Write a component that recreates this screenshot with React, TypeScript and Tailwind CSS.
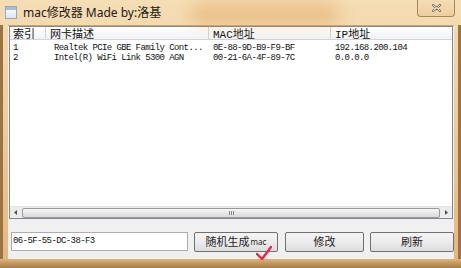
import React from 'react';

const rows = [
  { idx: '1', desc: 'Realtek PCIe GBE Family Cont...', mac: '0E-88-9D-B9-F9-BF', ip: '192.168.200.104' },
  { idx: '2', desc: 'Intel(R) WiFi Link 5300 AGN', mac: '00-21-6A-4F-89-7C', ip: '0.0.0.0' },
];

const cjk = "font-['Noto_Sans','Noto_Sans_CJK_SC',sans-serif]";
const mono = "font-['Liberation_Mono','Noto_Sans_CJK_SC',monospace]";

function WinButton({ children, className = '' }: { children: React.ReactNode; className?: string }) {
  return (
    <div
      className={`h-[20px] flex items-center justify-center border border-[#707070] rounded-[2px] bg-gradient-to-b from-[#f4f4f4] via-[#ececec] to-[#dcdcdc] text-[11px] text-[#222] ${cjk} ${className}`}
    >
      {children}
    </div>
  );
}

export default function App() {
  return (
    <div className="w-[461px] h-[268px] overflow-hidden relative flex flex-col bg-gradient-to-b from-[#f5ddb4] via-[#eccb98] to-[#e2b77d]">
      {/* title glow */}
      <div className="absolute left-[190px] top-[4px] w-[150px] h-[20px] rounded-full bg-[#d9954a] opacity-40 blur-[8px]" />

      {/* Title bar */}
      <div className="h-[25px] flex items-center relative shrink-0">
        <div className="ml-[5px] w-[12px] h-[13px] border border-[#9aa7b5] bg-gradient-to-b from-[#ffffff] to-[#dbe6f0] flex items-start">
          <div className="w-full h-[3px] bg-[#9fc0de]" />
        </div>
        <span className={`ml-[6px] text-[12px] text-[#1a1a1a] ${cjk}`}>mac修改器 Made by:洛基</span>
        <div className="absolute right-[6px] top-0 w-[38px] h-[17px] rounded-b-[4px] border border-t-0 border-[#a8865a] bg-gradient-to-b from-[#f3dcb4]/60 to-[#e8c895]/60 flex items-center justify-center">
          <svg width="9" height="8" viewBox="0 0 9 8">
            <path d="M1 1 L8 7 M8 1 L1 7" stroke="#6b5a45" strokeWidth="2.2" strokeLinecap="round" />
            <path d="M1 1 L8 7 M8 1 L1 7" stroke="#f4f4f4" strokeWidth="1" strokeLinecap="round" />
          </svg>
        </div>
      </div>

      {/* Body with side frames */}
      <div className="flex flex-1 min-h-0">
        <div className="w-[8px] shrink-0 flex">
          <div className="w-[3px] bg-[#9c7443]" />
          <div className="flex-1" />
        </div>

        <div className="flex-1 bg-[#f0f0f0] flex flex-col border-t border-[#c9a574]">
          {/* List view */}
          <div className="mx-[1px] h-[193px] border border-[#828790] bg-white flex flex-col">
            <div className={`h-[13px] flex items-stretch bg-gradient-to-b from-white to-[#f1f2f4] border-b border-[#d5d5d5] text-[11px] leading-[13px] text-[#111] ${cjk}`}>
              <div className="w-[36px] pl-[3px] border-r border-[#d5d5d5]">索引</div>
              <div className="w-[163px] pl-[4px] border-r border-[#d5d5d5]">网卡描述</div>
              <div className="w-[122px] pl-[4px] border-r border-[#d5d5d5]">
                <span className={mono}>MAC</span>地址
              </div>
              <div className="flex-1 pl-[4px]">
                <span className={mono}>IP</span>地址
              </div>
            </div>
            <div className={`flex-1 pt-[3px] text-[9px] tracking-[-0.6px] leading-[10px] text-[#111] ${mono}`}>
              {rows.map((r) => (
                <div key={r.idx} className="flex h-[10px]">
                  <div className="w-[36px] pl-[3px]">{r.idx}</div>
                  <div className="w-[163px] pl-[8px]">{r.desc}</div>
                  <div className="w-[122px] pl-[4px]">{r.mac}</div>
                  <div className="flex-1 pl-[4px]">{r.ip}</div>
                </div>
              ))}
            </div>
            {/* horizontal scrollbar */}
            <div className="h-[12px] flex items-center bg-[#ececec] border-t border-[#e3e3e3]">
              <div className="w-[12px] h-full flex items-center justify-center">
                <svg width="4" height="5" viewBox="0 0 4 5"><path d="M3 0 L0 2.5 L3 5 Z" fill="#505050" /></svg>
              </div>
              <div className="flex-1 h-[10px] rounded-[2px] border border-[#9a9a9a] bg-gradient-to-b from-[#f6f6f6] to-[#d9d9d9] flex items-center justify-center">
                <div className="flex gap-[1px]">
                  <div className="w-[1px] h-[4px] bg-[#888]" />
                  <div className="w-[1px] h-[4px] bg-[#888]" />
                  <div className="w-[1px] h-[4px] bg-[#888]" />
                </div>
              </div>
              <div className="w-[12px] h-full flex items-center justify-center">
                <svg width="4" height="5" viewBox="0 0 4 5"><path d="M1 0 L4 2.5 L1 5 Z" fill="#505050" /></svg>
              </div>
            </div>
          </div>

          {/* Bottom controls */}
          <div className="flex items-start mt-[13px] pl-[3px]">
            <div className={`w-[177px] h-[19px] border border-[#abadb3] bg-white flex items-center pl-[1px] text-[9px] tracking-[-0.6px] text-[#111] ${mono}`}>
              06-5F-55-DC-38-F3
            </div>
            <div className="relative ml-[6px]">
              <WinButton className="w-[84px]">
                随机生成<span className="text-[8px] ml-[1px]">mac</span>
              </WinButton>
              <svg className="absolute left-[62px] top-[13px]" width="16" height="16" viewBox="0 0 16 16">
                <path d="M1 9 L6 14 L15 2" stroke="#e8264a" strokeWidth="2.4" fill="none" strokeLinecap="round" strokeLinejoin="round" />
              </svg>
            </div>
            <WinButton className="w-[79px] ml-[7px]">修改</WinButton>
            <WinButton className="w-[84px] ml-[6px]">刷新</WinButton>
          </div>
        </div>

        <div className="w-[7px] shrink-0 flex">
          <div className="flex-1" />
          <div className="w-[3px] bg-[#9c7443]" />
        </div>
      </div>

      {/* Bottom frame */}
      <div className="h-[9px] shrink-0 bg-gradient-to-b from-[#e0b57a] to-[#a47a45]" />
    </div>
  );
}
